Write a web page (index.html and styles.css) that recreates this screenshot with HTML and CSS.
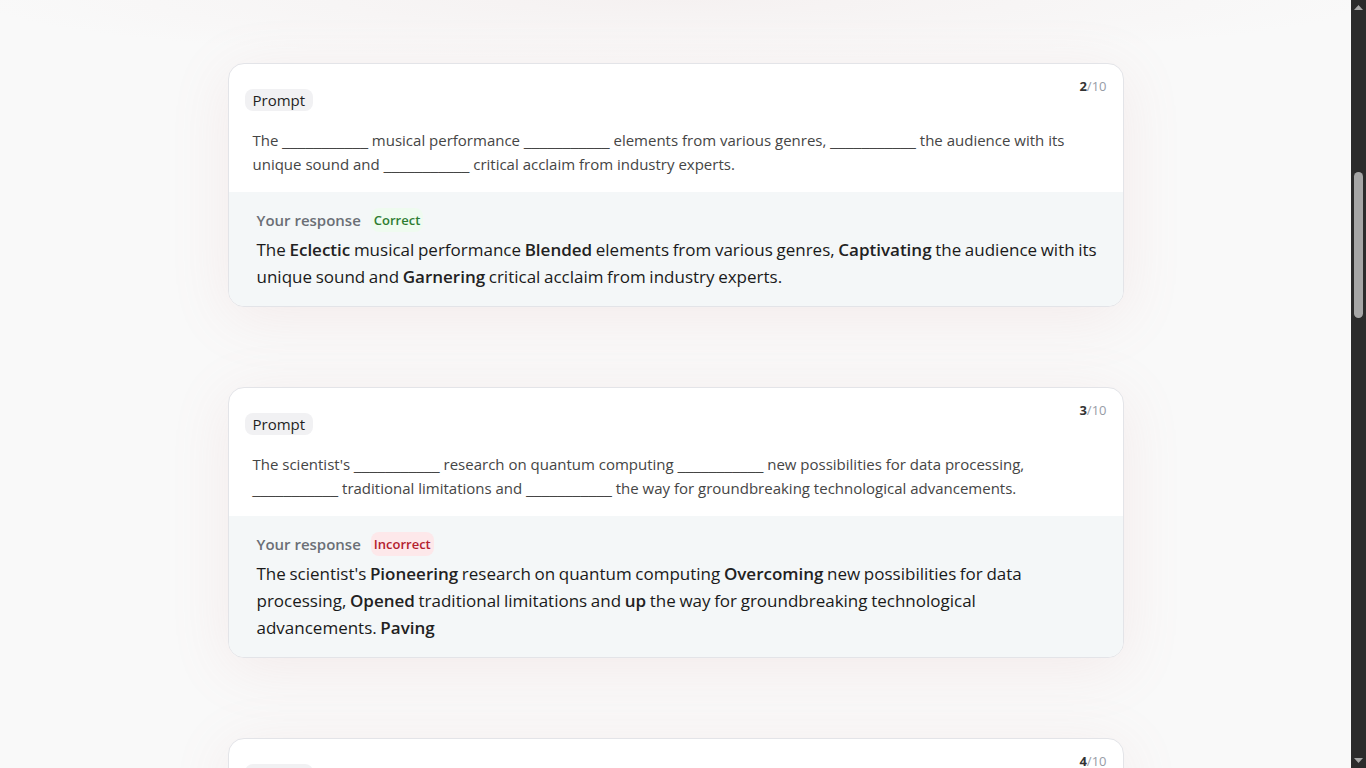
FILE: index.html
```html
<!DOCTYPE html>
<html lang="en">
<head>
<meta charset="utf-8">
<title>Results</title>
<link rel="stylesheet" href="styles.css">
</head>
<body>
<div class="window">
  <main class="viewport">
    <section class="list">
      <article class="card">
        <div class="counter"><b>2</b>/10</div>
        <div class="prompt">
          <span class="chip">Prompt</span>
          <p class="prompt-text">The <span class="blank">___________</span> musical performance <span class="blank">___________</span> elements from various genres, <span class="blank">___________</span> the audience with its unique sound and <span class="blank">___________</span> critical acclaim from industry experts.</p>
        </div>
        <div class="response">
          <div class="response-head"><span class="response-label">Your response</span><span class="badge badge-ok">Correct</span></div>
          <p class="response-text">The <b>Eclectic</b> musical performance <b>Blended</b> elements from various genres, <b>Captivating</b> the audience with its unique sound and <b>Garnering</b> critical acclaim from industry experts.</p>
        </div>
      </article>

      <article class="card">
        <div class="counter"><b>3</b>/10</div>
        <div class="prompt">
          <span class="chip">Prompt</span>
          <p class="prompt-text">The scientist's <span class="blank">___________</span> research on quantum computing <span class="blank">___________</span> new possibilities for data processing, <span class="blank">___________</span> traditional limitations and <span class="blank">___________</span> the way for groundbreaking technological advancements.</p>
        </div>
        <div class="response">
          <div class="response-head"><span class="response-label">Your response</span><span class="badge badge-bad">Incorrect</span></div>
          <p class="response-text">The scientist's <b>Pioneering</b> research on quantum computing <b>Overcoming</b> new possibilities for data processing, <b>Opened</b> traditional limitations and <b>up</b> the way for groundbreaking technological advancements. <b>Paving</b></p>
        </div>
      </article>

      <article class="card">
        <div class="counter"><b>4</b>/10</div>
        <div class="prompt">
          <span class="chip">Prompt</span>
        </div>
      </article>
    </section>
  </main>
  <div class="scrollbar" aria-hidden="true">
    <div class="sb-button">
      <svg width="15" height="15" viewBox="0 0 15 15"><path d="M3 10 L7.5 5 L12 10 Z" fill="#a6a6a6"/></svg>
    </div>
    <div class="sb-track"><div class="sb-thumb"></div></div>
    <div class="sb-button">
      <svg width="15" height="15" viewBox="0 0 15 15"><path d="M3 5 L7.5 10 L12 5 Z" fill="#a6a6a6"/></svg>
    </div>
  </div>
</div>
</body>
</html>
```

FILE: styles.css
```css
html, body {
  margin: 0;
  height: 100%;
}

body {
  background: #f9f9f9;
  color: #1f1f1f;
  font-family: "Open Sans", "Noto Sans", sans-serif;
  overflow: hidden;
}

.window {
  display: flex;
  height: 100vh;
}

.viewport {
  flex: 1;
  min-width: 0;
  height: 100vh;
  overflow: hidden;
  background: radial-gradient(ellipse 700px 60px at 50% 0, rgba(225, 200, 200, 0.16), rgba(249, 249, 249, 0) 100%), #f9f9f9;
}

.list {
  max-width: 896px;
  margin: 0 auto;
  padding-top: 63px;
  display: flex;
  flex-direction: column;
  gap: 80px;
}

.card {
  position: relative;
  flex-shrink: 0;
  background: #ffffff;
  border: 1px solid #e3e4e8;
  border-radius: 16px;
  overflow: hidden;
  box-shadow: 0 10px 60px rgba(205, 130, 130, 0.12);
}

.counter {
  position: absolute;
  top: 13px;
  right: 16px;
  font-size: 13px;
  line-height: 18px;
  color: #979ca6;
}

.counter b {
  color: #333;
  font-weight: 700;
}

.prompt {
  padding: 25px 24px 16px 16px;
}

.chip {
  display: inline-block;
  padding: 2px 8px;
  border-radius: 8px;
  background: #f1f1f3;
  color: #1f1f1f;
  font-size: 15px;
  line-height: 18px;
}

.prompt-text {
  margin: 17px 0 0 8px;
  font-size: 15px;
  line-height: 24px;
  color: #454545;
}

.blank {
  font-family: "Liberation Sans", Arial, sans-serif;
  font-size: 14px;
  line-height: 0;
}

.response {
  background: #f4f7f8;
  padding: 16px 24px 16px 28px;
}

.response-head {
  display: flex;
  align-items: center;
  gap: 10px;
  height: 24px;
}

.response-label {
  font-size: 15px;
  font-weight: 600;
  color: #6b6f76;
}

.badge {
  display: inline-block;
  padding: 0 3px;
  border-radius: 8px;
  font-size: 13px;
  line-height: 24px;
  font-weight: 600;
}

.badge-ok {
  background: #effbf0;
  color: #2e7d32;
}

.badge-bad {
  background: #fde8ea;
  color: #b3202e;
}

.response-text {
  margin: 4px 0 0;
  font-size: 17px;
  line-height: 27px;
  word-spacing: -0.8px;
  color: #1a1a1a;
}

.response-text b {
  font-weight: 600;
  color: #222;
}

.scrollbar {
  width: 15px;
  flex-shrink: 0;
  height: 100vh;
  background: #2b2b2b;
  display: flex;
  flex-direction: column;
}

.sb-button {
  height: 15px;
  flex-shrink: 0;
}

.sb-button svg {
  display: block;
}

.sb-track {
  flex: 1;
  display: flex;
  justify-content: center;
}

.sb-thumb {
  width: 9px;
  height: 146px;
  margin-top: 157px;
  border-radius: 5px;
  background: #a6a6a6;
}
```
